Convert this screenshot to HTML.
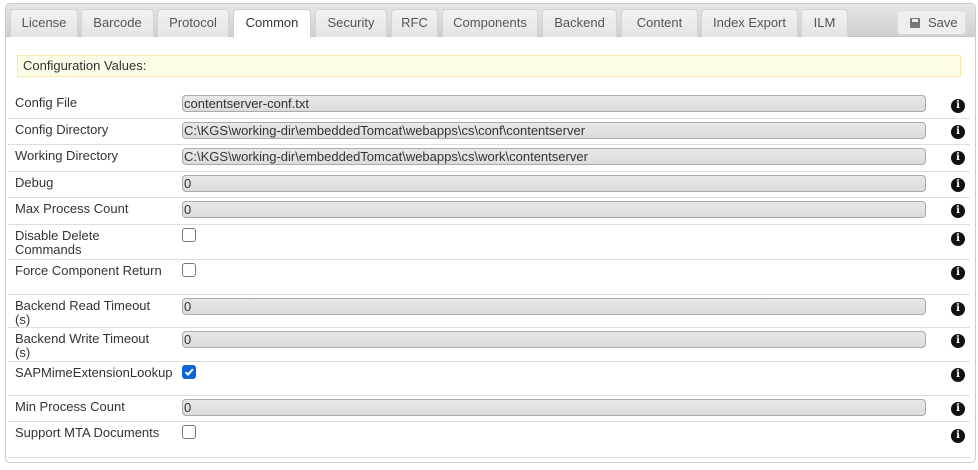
<!DOCTYPE html>
<html><head><style>
*{box-sizing:border-box;margin:0;padding:0}
body{width:978px;height:470px;background:#fff;font-family:"Liberation Sans","DejaVu Sans",sans-serif;font-size:13px;color:#333;position:relative;overflow:hidden}
.box{position:absolute;left:5px;top:3px;width:971px;height:460px;border:1px solid #ccc;border-radius:5px}
.bar{position:absolute;left:6px;top:4px;width:969px;height:33px;background:linear-gradient(#e6e6e6,#d0d0d0);border-radius:4px 4px 0 0;border-bottom:1px solid #c8c8c8}
.tab{position:absolute;top:9px;height:28px;background:linear-gradient(#f2f2f2,#e4e4e4);border:1px solid #d3d3d3;border-bottom:none;border-radius:4px 4px 0 0;color:#555;text-align:center;line-height:26px}
.tab.act{top:9px;height:29px;background:#fff;color:#333;border-color:#ccc}
.save{position:absolute;left:897px;top:10px;width:69px;height:25px;background:#eee;border:1px solid #ddd;border-radius:4px;color:#555;line-height:23px;padding-left:30px}
.save i{position:absolute;left:12px;top:7px;width:10px;height:10px;background:#777;border-radius:1px}
.save i:after{content:"";position:absolute;left:2px;top:1px;width:6px;height:3px;background:#eee}
.yel{position:absolute;left:17px;top:55px;width:944px;height:22px;background:#fefbe6;border:1px solid #f5eaa8;padding-left:5px;line-height:20px}
.row{position:absolute;left:8px;width:962px;border-bottom:1px solid #ddd}
.lbl{position:absolute;left:7px;top:4px;width:165px;line-height:14px}
.inp{position:absolute;left:174px;top:3px;width:744px;height:17px;border:1px solid #aaa;border-radius:4px;background:linear-gradient(#e8e8e8,#dcdcdc);line-height:15px;padding-left:1px;color:#333}
.cb{position:absolute;left:174px;top:3px;width:14px;height:14px;border:1px solid #777;border-radius:3px;background:#fff}
.cb.on{background:#0a66d8;border-color:#0a66d8}
.info{position:absolute;left:943px;width:14px;height:14px;border-radius:50%;background:#111;color:#fff;font:bold 10px "DejaVu Serif",serif;text-align:center;line-height:14px}
</style></head><body>
<div class="box"></div>
<div class="bar"></div>
<div class="tab" style="left:10px;width:68px">License</div>
<div class="tab" style="left:81px;width:73px">Barcode</div>
<div class="tab" style="left:157px;width:72px">Protocol</div>
<div class="tab act" style="left:233px;width:78px">Common</div>
<div class="tab" style="left:315px;width:72px">Security</div>
<div class="tab" style="left:391px;width:47px">RFC</div>
<div class="tab" style="left:442px;width:96px">Components</div>
<div class="tab" style="left:542px;width:75px">Backend</div>
<div class="tab" style="left:621px;width:77px">Content</div>
<div class="tab" style="left:701px;width:97px">Index Export</div>
<div class="tab" style="left:801px;width:47px">ILM</div>
<div class="save"><i></i>Save</div>
<div class="yel">Configuration Values:</div>

<div class="row" style="top:92px;height:27px"><div class="lbl">Config File</div><div class="inp">contentserver-conf.txt</div><div class="info" style="top:7px">i</div></div>
<div class="row" style="top:119px;height:26px"><div class="lbl">Config Directory</div><div class="inp">C:\KGS\working-dir\embeddedTomcat\webapps\cs\conf\contentserver</div><div class="info" style="top:6px">i</div></div>
<div class="row" style="top:145px;height:27px"><div class="lbl">Working Directory</div><div class="inp">C:\KGS\working-dir\embeddedTomcat\webapps\cs\work\contentserver</div><div class="info" style="top:6px">i</div></div>
<div class="row" style="top:172px;height:26px"><div class="lbl">Debug</div><div class="inp">0</div><div class="info" style="top:6px">i</div></div>
<div class="row" style="top:198px;height:27px"><div class="lbl">Max Process Count</div><div class="inp">0</div><div class="info" style="top:6px">i</div></div>
<div class="row" style="top:225px;height:35px"><div class="lbl">Disable Delete<br>Commands</div><div class="cb"></div><div class="info" style="top:7px">i</div></div>
<div class="row" style="top:260px;height:35px"><div class="lbl">Force Component Return</div><div class="cb"></div><div class="info" style="top:6px">i</div></div>
<div class="row" style="top:295px;height:33px"><div class="lbl">Backend Read Timeout<br>(s)</div><div class="inp">0</div><div class="info" style="top:7px">i</div></div>
<div class="row" style="top:328px;height:34px"><div class="lbl">Backend Write Timeout<br>(s)</div><div class="inp">0</div><div class="info" style="top:6px">i</div></div>
<div class="row" style="top:362px;height:34px"><div class="lbl">SAPMimeExtensionLookup</div><div class="cb on"><svg width="12" height="12" viewBox="0 0 12 12" style="position:absolute;left:0;top:0"><path d="M2.5 6.2 L5 8.6 L9.8 3.2" stroke="#fff" stroke-width="2" fill="none"/></svg></div><div class="info" style="top:6px">i</div></div>
<div class="row" style="top:396px;height:26px"><div class="lbl">Min Process Count</div><div class="inp">0</div><div class="info" style="top:6px">i</div></div>
<div class="row" style="top:422px;height:36px"><div class="lbl">Support MTA Documents</div><div class="cb"></div><div class="info" style="top:7px">i</div></div>
</body></html>
